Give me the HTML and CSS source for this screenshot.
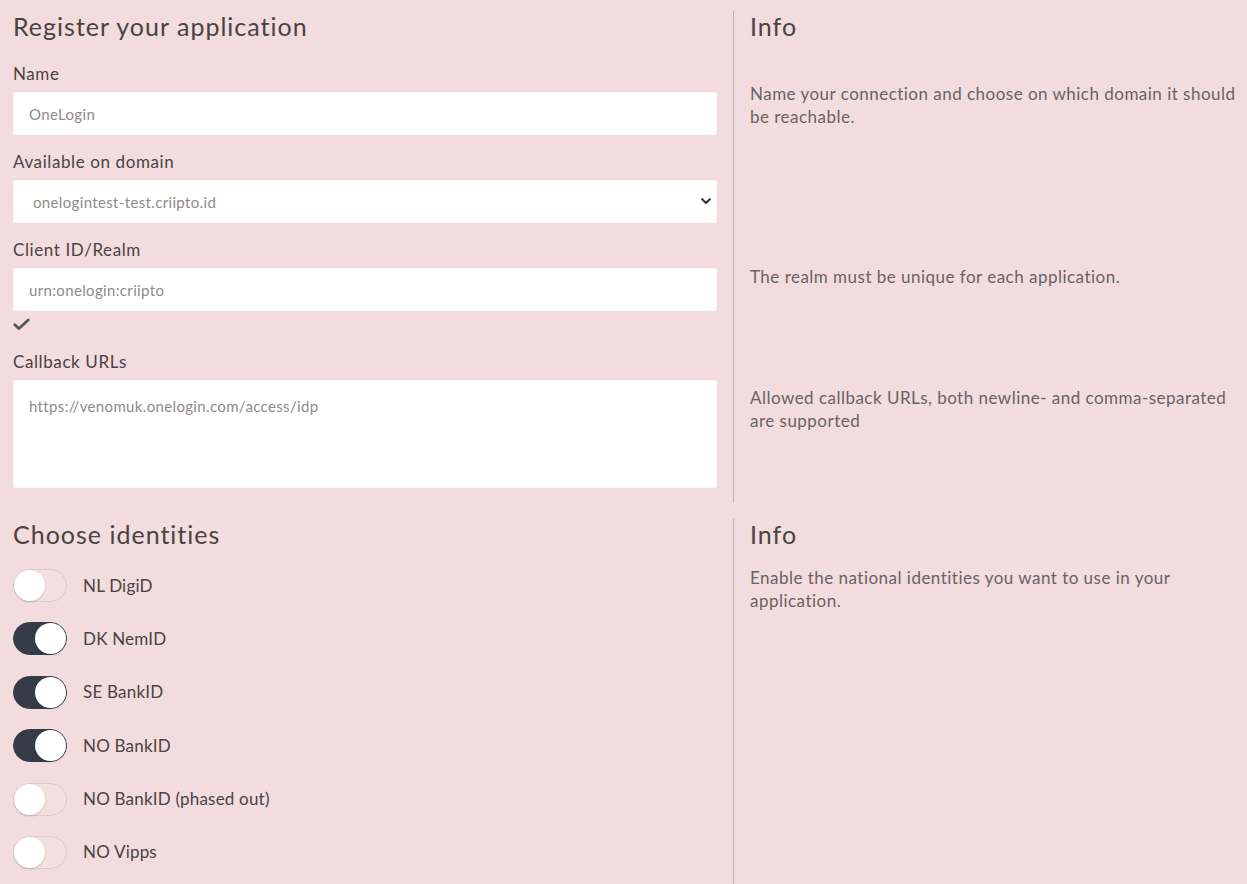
FILE: index.html
```html
<!DOCTYPE html>
<html lang="en">
<head>
<meta charset="utf-8">
<title>Register your application</title>
<link rel="stylesheet" href="styles.css">
</head>
<body>
<div class="page">
  <section class="section section-register">
    <div class="form">
      <h2 class="heading">Register your application</h2>
      <div class="group">
        <label class="label" for="name">Name</label>
        <input class="field" id="name" type="text" value="OneLogin">
      </div>
      <div class="group">
        <label class="label" for="domain">Available on domain</label>
        <div class="select-wrap">
          <select class="field select" id="domain">
            <option>onelogintest-test.criipto.id</option>
          </select>
          <svg class="chevron" width="10" height="7" viewBox="0 0 10 7"><path d="M1.2 1.2 L5 5 L8.8 1.2" fill="none" stroke="#3a3a3a" stroke-width="2.2" stroke-linecap="round" stroke-linejoin="round"/></svg>
        </div>
      </div>
      <div class="group group-check">
        <label class="label" for="realm">Client ID/Realm</label>
        <input class="field" id="realm" type="text" value="urn:onelogin:criipto">
        <div class="valid">
          <svg width="17" height="13" viewBox="0 0 17 13"><path d="M1.8 6.8 L6 10.6 L15.2 2" fill="none" stroke="#5a5656" stroke-width="2.8" stroke-linecap="round" stroke-linejoin="round"/></svg>
        </div>
      </div>
      <div class="group group-last">
        <label class="label" for="callbacks">Callback URLs</label>
        <textarea class="field textarea" id="callbacks">https://venomuk.onelogin.com/access/idp</textarea>
      </div>
    </div>
    <aside class="info">
      <h2 class="heading">Info</h2>
      <p class="info-text info-1">Name your connection and choose on which domain it should be reachable.</p>
      <p class="info-text info-2">The realm must be unique for each application.</p>
      <p class="info-text info-3">Allowed callback URLs, both newline- and comma-separated are supported</p>
    </aside>
  </section>

  <section class="section section-identities">
    <div class="form">
      <h2 class="heading">Choose identities</h2>
      <ul class="toggles">
        <li class="toggle-row"><span class="toggle"><span class="knob"></span></span><span class="toggle-label">NL DigiD</span></li>
        <li class="toggle-row"><span class="toggle on"><span class="knob"></span></span><span class="toggle-label">DK NemID</span></li>
        <li class="toggle-row"><span class="toggle on"><span class="knob"></span></span><span class="toggle-label">SE BankID</span></li>
        <li class="toggle-row"><span class="toggle on"><span class="knob"></span></span><span class="toggle-label">NO BankID</span></li>
        <li class="toggle-row"><span class="toggle"><span class="knob"></span></span><span class="toggle-label">NO BankID (phased out)</span></li>
        <li class="toggle-row"><span class="toggle"><span class="knob"></span></span><span class="toggle-label">NO Vipps</span></li>
      </ul>
    </div>
    <aside class="info">
      <h2 class="heading">Info</h2>
      <p class="info-text info-4">Enable the national identities you want to use in your application.</p>
    </aside>
  </section>
</div>
</body>
</html>
```

FILE: styles.css
```css
* { box-sizing: border-box; }

html, body {
  margin: 0;
  padding: 0;
  background: #f2dcdd;
}

body {
  font-family: "Lato", "Open Sans", sans-serif;
  font-weight: 300;
  color: #4a4345;
  height: 884px;
  overflow: hidden;
}

.page {
  padding: 11px 0 0 13px;
}

.section {
  display: grid;
  grid-template-columns: 704px 1fr;
  column-gap: 16px;
}

.section-identities {
  margin-top: 16px;
}

.form {
  display: flex;
  flex-direction: column;
  padding-bottom: 15px;
}

.heading {
  margin: 0;
  font-size: 25px;
  line-height: 30px;
  font-weight: 400;
  color: #4a4345;
  letter-spacing: 1px;
}

.form > .heading {
  margin-bottom: 22px;
}

.section-identities .form > .heading {
  margin-bottom: 20px;
}

.group {
  display: flex;
  flex-direction: column;
  margin-bottom: 16px;
}

.group-last {
  margin-bottom: 0;
}

.label {
  font-size: 17px;
  line-height: 22px;
  font-weight: 400;
  margin-bottom: 7px;
  color: #4a4345;
  letter-spacing: 0.6px;
}

.field {
  display: block;
  width: 100%;
  height: 43px;
  border: 1px solid #fbf6f6;
  border-radius: 2px;
  background: #ffffff;
  padding: 0 15px;
  font-family: "Lato", "Open Sans", sans-serif;
  font-weight: 400;
  font-size: 15px;
  color: #8e8a8b;
  outline: none;
  letter-spacing: 0.35px;
}

.select-wrap {
  position: relative;
}

.select {
  appearance: none;
  -webkit-appearance: none;
  padding-left: 19px;
}

.chevron {
  position: absolute;
  right: 6px;
  top: 18px;
}

.valid {
  height: 24px;
  padding-top: 7px;
}

.valid svg {
  display: block;
}

.textarea {
  height: 108px;
  padding-top: 15px;
  resize: none;
  line-height: 20px;
}

.info {
  border-left: 1px solid #c3b3b4;
  padding-left: 16px;
  display: flex;
  flex-direction: column;
}

.info-text {
  margin: 0;
  font-size: 17px;
  line-height: 23px;
  font-weight: 400;
  color: #6a6264;
  letter-spacing: 0.48px;
}

.info-1 { margin-top: 41px; }
.info-2 { margin-top: 137px; }
.info-3 { margin-top: 98px; }
.info-4 { margin-top: 17px; }

.toggles {
  list-style: none;
  margin: 0;
  padding: 0;
  display: flex;
  flex-direction: column;
  gap: 20.4px;
}

.toggle-row {
  display: flex;
  align-items: center;
  height: 33px;
}

.toggle {
  position: relative;
  flex: 0 0 54px;
  width: 54px;
  height: 33px;
  border-radius: 17px;
  border: 1px solid #dccbcc;
  background: #f3dfe0;
  margin-right: 16px;
}

.toggle .knob {
  position: absolute;
  top: 0;
  left: 0;
  width: 31px;
  height: 31px;
  border-radius: 50%;
  background: #ffffff;
  box-shadow: 0 1px 2px rgba(0, 0, 0, 0.18);
}

.toggle.on {
  background: #353b47;
  border-color: #353b47;
}

.toggle.on .knob {
  left: 21px;
}

.toggle-label {
  font-size: 17px;
  line-height: 22px;
  font-weight: 400;
  color: #4a4345;
  letter-spacing: 0.2px;
}
```
